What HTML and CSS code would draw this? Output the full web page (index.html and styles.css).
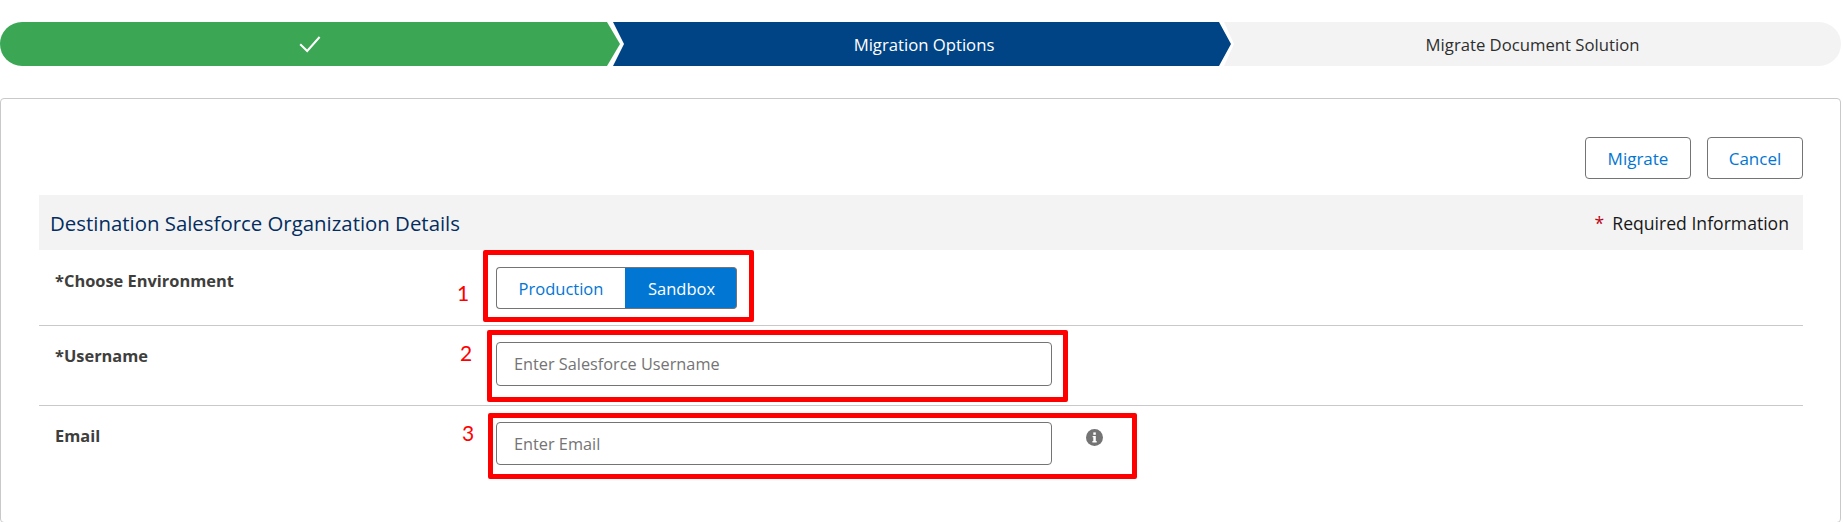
FILE: index.html
```html
<!DOCTYPE html>
<html lang="en">
<head>
<meta charset="utf-8">
<title>Migration Options</title>
<link rel="stylesheet" href="styles.css">
</head>
<body>
<div class="page">
  <nav class="path">
    <div class="step step-done">
      <svg class="check" width="22" height="17" viewBox="0 0 22 17"><path d="M1.2 8.2 L8.2 15 L20.6 1" fill="none" stroke="#fff" stroke-width="2"/></svg>
    </div>
    <div class="step step-current">Migration Options</div>
    <div class="step step-next">Migrate Document Solution</div>
  </nav>

  <main class="card">
    <div class="actions">
      <button class="btn btn-migrate" type="button">Migrate</button>
      <button class="btn btn-cancel" type="button">Cancel</button>
    </div>
    <header class="band">
      <h2 class="band-title">Destination Salesforce Organization Details</h2>
      <p class="band-note"><span class="star">*</span>Required Information</p>
    </header>
    <div class="row row-env">
      <label class="label">*Choose Environment</label>
      <div class="toggle">
        <button class="seg seg-off" type="button">Production</button>
        <button class="seg seg-on" type="button">Sandbox</button>
      </div>
    </div>
    <div class="row row-user">
      <label class="label">*Username</label>
      <input class="field" type="text" placeholder="Enter Salesforce Username">
    </div>
    <div class="row row-mail">
      <label class="label">Email</label>
      <input class="field field-mail" type="text" placeholder="Enter Email">
      <svg class="info" width="17" height="17" viewBox="0 0 17 17">
        <circle cx="8.5" cy="8.5" r="8.5" fill="#747474"/>
        <rect x="7.3" y="3.4" width="2.5" height="2.4" fill="#fff"/>
        <path d="M6.6 7 H9.8 V12.1 H10.7 V13.4 H6.4 V12.1 H7.3 V8.3 H6.6 Z" fill="#fff"/>
      </svg>
    </div>
  </main>

  <div class="mark mark-1"></div>
  <div class="mark mark-2"></div>
  <div class="mark mark-3"></div>
  <span class="num num-1">1</span>
  <span class="num num-2">2</span>
  <span class="num num-3">3</span>
</div>
</body>
</html>
```
FILE: styles.css
```css
* { box-sizing: border-box; }
html, body { margin: 0; padding: 0; background: #fff; }
body { font-family: "Open Sans", "Noto Sans", sans-serif; font-size: 16.5px; color: #181818; overflow: hidden; }
.page { position: relative; width: 1843px; height: 522px; padding: 22px 2px 0 0; overflow: hidden; }

.path { display: flex; height: 44px; }
.step { display: flex; align-items: center; justify-content: center; height: 44px; font-size: 16.7px; }
.step-done {
  width: 620px; background: #3ba755; border-radius: 22px 0 0 22px;
  clip-path: polygon(0 0, 607px 0, 100% 50%, 607px 100%, 0 100%);
}
.step-current {
  width: 618px; margin-left: -7px; padding-left: 4px; background: #014486; color: #fff;
  clip-path: polygon(0 0, 606px 0, 100% 50%, 606px 100%, 0 100%, 11px 50%);
}
.step-next {
  flex: 1; margin-left: -7px; background: #f3f3f3; color: #2e2e2e; border-radius: 0 22px 22px 0;
  clip-path: polygon(0 0, 100% 0, 100% 100%, 0 100%, 10px 50%);
}
.check { display: block; }

.card {
  margin-top: 32px; height: 425px; padding: 38px 37px 0 38px;
  border: 1px solid #c9c9c9; border-radius: 4px; background: #fff;
}
.actions { display: flex; justify-content: flex-end; gap: 16px; height: 42px; }
.btn {
  height: 42px; padding: 0; background: #fff; border: 1px solid #747474; border-radius: 4px;
  color: #0176d3; font: inherit; font-size: 17px;
}
.btn-migrate { width: 106px; }
.btn-cancel { width: 96px; }

.band {
  display: flex; align-items: center; justify-content: space-between;
  height: 55px; margin-top: 16px; padding: 0 14px 0 11px; background: #f3f3f3;
}
.band-title { margin: 0; font-size: 20.4px; font-weight: 400; color: #032d60; }
.band-note { margin: 0; font-size: 17.6px; color: #181818; }
.star { margin-right: 8px; color: #ba0517; }

.row { display: flex; align-items: flex-start; border-bottom: 1px solid #c9c9c9; }
.row-env { height: 76px; padding-top: 17px; }
.row-user { height: 80px; padding-top: 16px; }
.row-mail { padding-top: 16px; border-bottom: 0; }
.label { width: 457px; padding: 4px 0 0 16px; font-size: 16.4px; font-weight: 700; color: #3e3e3c; line-height: 20px; flex: none; }

.toggle { display: flex; width: 241px; height: 42px; }
.seg { height: 42px; padding: 0; font: inherit; }
.seg-off { width: 129px; background: #fff; color: #0176d3; border: 1px solid #747474; border-right: 0; border-radius: 4px 0 0 4px; }
.seg-on { flex: 1; padding-left: 2px; background: #0176d3; color: #fff; border: 1px solid #747474; border-left: 0; border-radius: 0 4px 4px 0; }

.field {
  display: block; width: 556px; height: 44px; padding: 0 17px; background: #fff;
  border: 1px solid #747474; border-radius: 4px; font: inherit; font-size: 16.3px; color: #181818; outline: none;
}
.field::placeholder { color: #747474; opacity: 1; }
.field-mail { height: 43px; }
.info { display: block; flex: none; margin: 7px 0 0 34px; }

.mark { position: absolute; border: 5px solid #f00; border-radius: 2px; pointer-events: none; }
.mark-1 { left: 483px; top: 250px; width: 271px; height: 72px; }
.mark-2 { left: 487px; top: 330px; width: 581px; height: 72px; }
.mark-3 { left: 488px; top: 413px; width: 649px; height: 66px; }
.num { position: absolute; font-family: Lato, "Open Sans", sans-serif; font-size: 21px; line-height: 24px; color: #f00; }
.num-1 { left: 457px; top: 281px; }
.num-2 { left: 460px; top: 341px; }
.num-3 { left: 462px; top: 421px; }
```
